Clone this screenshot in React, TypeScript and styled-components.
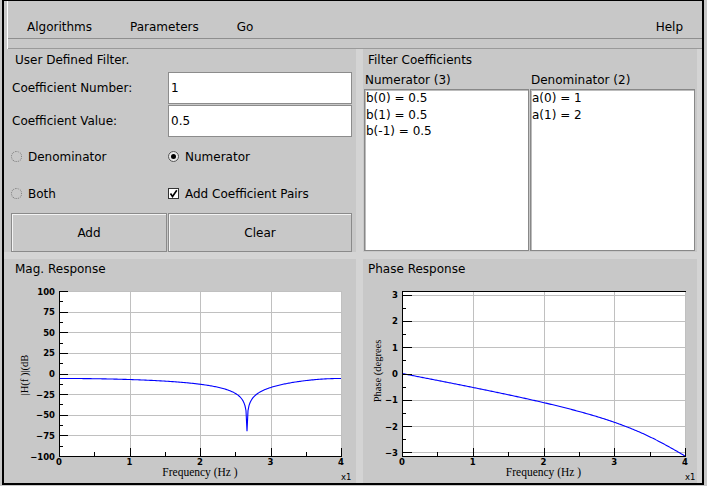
import React from "react";
import styled, { createGlobalStyle } from "styled-components";

const PANEL = "#c8c8c8";
const BAND = "#d4d4d4";
const GRID = "#c0c0c0";
const BLUE = "#0000ff";

const Global = createGlobalStyle`
  *, *::before, *::after { box-sizing: border-box; }
  html, body { margin: 0; padding: 0; background: #c8c8c8; }
  body {
    font-family: "DejaVu Sans", "Liberation Sans", sans-serif;
    font-size: 12px;
    color: #000;
  }
`;

const Window = styled.div`
  width: 702px;
  height: 485px;
  margin-left: 2px;
  border-style: solid;
  border-color: #000;
  border-width: 1px 2px 2px 2px;
  background: ${PANEL};
  display: flex;
  flex-direction: column;
`;

const TopChrome = styled.div`
  padding-left: 3px;
`;

const ChromeInner = styled.div`
  border-left: 1px solid #ffffff;
  display: flex;
  flex-direction: column;
`;

const MenuBar = styled.nav`
  height: 38px;
  border-bottom: 1px solid #8e8e8e;
  display: flex;
  align-items: flex-end;
  padding: 0 0 4px 0;
`;

const MenuItem = styled.span<{ $right?: boolean }>`
  line-height: 14px;
  padding: 0 19px;
  margin-left: ${(p) => (p.$right ? "auto" : "0")};
`;

const MenuStrip = styled.div`
  height: 10px;
  border-bottom: 1px solid #9a9a9a;
`;

const Main = styled.div`
  flex: 1;
  background: ${BAND};
  display: grid;
  grid-template-columns: 352px 334px;
  grid-template-rows: 203px 224px;
  column-gap: 7px;
  row-gap: 7px;
  padding-right: 5px;
`;

const Panel = styled.section<{ $padLeft?: number }>`
  background: ${PANEL};
  display: flex;
  flex-direction: column;
  padding-left: ${(p) => p.$padLeft ?? 0}px;
  overflow: hidden;
`;

const PanelTitle = styled.div<{ $indent: number; $h: number }>`
  height: ${(p) => p.$h}px;
  line-height: ${(p) => p.$h}px;
  padding-left: ${(p) => p.$indent}px;
  white-space: nowrap;
`;

const FormRow = styled.div<{ $h: number; $mt?: number; $mb?: number }>`
  display: grid;
  grid-template-columns: 156px 184px;
  column-gap: 1px;
  height: ${(p) => p.$h}px;
  margin-top: ${(p) => p.$mt ?? 0}px;
  margin-bottom: ${(p) => p.$mb ?? 0}px;
  align-items: center;
`;

const FieldLabel = styled.label`
  padding-left: 1px;
  white-space: nowrap;
`;

const TextField = styled.input`
  height: 32px;
  width: 100%;
  border: 1px solid #8c8c8c;
  background: #fff;
  padding: 0 2px;
  margin: 0;
  font-family: "DejaVu Sans", "Liberation Sans", sans-serif;
  font-size: 12px;
  color: #000;
  outline: none;
`;

const Option = styled.div`
  display: flex;
  align-items: center;
  gap: 6px;
  white-space: nowrap;
`;

const RadioMark = styled.span<{ $checked?: boolean }>`
  width: 11px;
  height: 11px;
  border-radius: 50%;
  border: 1px ${(p) => (p.$checked ? "solid #555" : "dotted #7a7a7a")};
  background: ${(p) => (p.$checked ? "#e8e8e8" : "transparent")};
  display: flex;
  align-items: center;
  justify-content: center;
  &::after {
    content: "";
    width: 5px;
    height: 5px;
    border-radius: 50%;
    background: ${(p) => (p.$checked ? "#000" : "transparent")};
  }
`;

const CheckMark = styled.span`
  width: 11px;
  height: 11px;
  border: 1px solid #333;
  background: #fff;
  display: flex;
  align-items: center;
  justify-content: center;
`;

const Button = styled.button`
  height: 39px;
  width: 100%;
  margin: 0;
  padding: 0;
  background: ${PANEL};
  border: 1px solid #8a8a8a;
  box-shadow: inset 1px 1px 0 #f4f4f4;
  font-family: "DejaVu Sans", "Liberation Sans", sans-serif;
  font-size: 12px;
  color: #000;
`;

const Columns = styled.div`
  display: grid;
  grid-template-columns: 165px 165px;
  column-gap: 1px;
  padding-left: 1px;
`;

const ListColumn = styled.div`
  display: flex;
  flex-direction: column;
`;

const ListHeader = styled.div`
  height: 17px;
  line-height: 17px;
  padding-left: 1px;
  white-space: nowrap;
`;

const ListBox = styled.div`
  height: 162px;
  background: #fff;
  border: 1px solid #888;
  box-shadow: inset 1px 1px 0 #bcbcbc;
  padding: 0 1px;
  line-height: 16.5px;
`;

const ListItem = styled.div`
  white-space: nowrap;
`;

const ChartSvg = styled.svg`
  display: block;
  flex: none;
`;

interface ChartSpec {
  width: number;
  height: number;
  left: number;
  right: number;
  top: number;
  bottom: number;
  yMin: number;
  yMax: number;
  yMajor: number[];
  yMinor: number[];
  yGrid: number[];
  yMajorLen: number;
  fmt: (v: number) => string;
  axisLabel: string;
  axisLabelX: number;
  axisLabelY: number;
  topBlack: boolean;
  fn: (w: number) => number;
  clipMin?: number;
}

const TICK_FONT = { fontFamily: "'DejaVu Sans', sans-serif", fontSize: 8.5, fontWeight: 700 } as const;
const SERIF_FONT = { fontFamily: "'Liberation Serif', 'DejaVu Serif', serif" } as const;

function Chart({ spec }: { spec: ChartSpec }) {
  const { width, height, left, right, top, bottom, yMin, yMax } = spec;
  const sx = (f: number) => left + (f / 4) * (right - left);
  const sy = (v: number) => bottom - ((v - yMin) / (yMax - yMin)) * (bottom - top);
  const c = (v: number) => Math.round(v) + 0.5;
  const N = Math.round(right - left);
  const pts: string[] = [];
  for (let i = 0; i <= N; i++) {
    const f = (4 * i) / N;
    const w = (Math.PI * f) / 4;
    let v = spec.fn(w);
    if (spec.clipMin !== undefined) v = Math.max(spec.clipMin, v);
    pts.push(`${(left + i).toFixed(1)},${sy(v).toFixed(2)}`);
  }
  const xMajor = [0, 1, 2, 3, 4];
  const xMinor = [0.5, 1.5, 2.5, 3.5];
  const midX = (left + right) / 2;
  return (
    <ChartSvg width={width} height={height} viewBox={`0 0 ${width} ${height}`}>
      <rect x={left} y={top} width={right - left} height={bottom - top} fill="#fff" />
      <g stroke={GRID} strokeWidth={1} shapeRendering="crispEdges">
        {spec.yGrid.map((v) => (
          <line key={`gy${v}`} x1={left} x2={right} y1={c(sy(v))} y2={c(sy(v))} />
        ))}
        {[1, 2, 3, 4].map((f) => (
          <line key={`gx${f}`} x1={c(sx(f))} x2={c(sx(f))} y1={top} y2={bottom} />
        ))}
      </g>
      <polyline points={pts.join(" ")} fill="none" stroke={BLUE} strokeWidth={1.1} />
      <g stroke="#000" strokeWidth={1} shapeRendering="crispEdges">
        {spec.topBlack && <line x1={left} x2={right + 1} y1={c(top)} y2={c(top)} />}
        <line x1={c(left)} x2={c(left)} y1={top} y2={bottom + 1} />
        <line x1={left} x2={right + 1} y1={c(bottom)} y2={c(bottom)} />
        {spec.yMajor.map((v) => (
          <line key={`ty${v}`} x1={left} x2={left + spec.yMajorLen} y1={c(sy(v))} y2={c(sy(v))} />
        ))}
        {spec.yMinor.map((v) => (
          <line key={`tm${v}`} x1={left} x2={left + 4} y1={c(sy(v))} y2={c(sy(v))} />
        ))}
        {xMajor.map((f) => (
          <line key={`tx${f}`} x1={c(sx(f))} x2={c(sx(f))} y1={bottom - 8} y2={bottom} />
        ))}
        {xMinor.map((f) => (
          <line key={`txm${f}`} x1={c(sx(f))} x2={c(sx(f))} y1={bottom - 4} y2={bottom} />
        ))}
      </g>
      <g {...TICK_FONT} fill="#000">
        {spec.yMajor.map((v) => (
          <text key={`ly${v}`} x={left - 4} y={sy(v) + 3.5} textAnchor="end">
            {spec.fmt(v)}
          </text>
        ))}
        {xMajor.map((f) => (
          <text key={`lx${f}`} x={sx(f)} y={bottom + 8.5} textAnchor="middle">
            {f}
          </text>
        ))}
      </g>
      <text x={right} y={height - 2} fontFamily="'DejaVu Sans', sans-serif" fontSize={8.5} fill="#000">
        x1
      </text>
      <text x={midX} y={bottom + 19.5} textAnchor="middle" fontSize={11.5} fill="#000" {...SERIF_FONT}>
        Frequency (Hz )
      </text>
      <text
        transform={`translate(${spec.axisLabelX} ${spec.axisLabelY}) rotate(-90)`}
        textAnchor="middle"
        fontSize={10.5}
        fill="#000"
        {...SERIF_FONT}
      >
        {spec.axisLabel}
      </text>
    </ChartSvg>
  );
}

const fmtNum = (v: number) => (v < 0 ? `\u2212${Math.abs(v)}` : `${v}`);

const magSpec: ChartSpec = {
  width: 352,
  height: 203,
  left: 55,
  right: 337,
  top: 12,
  bottom: 177,
  yMin: -100,
  yMax: 100,
  yMajor: [100, 75, 50, 25, 0, -25, -50, -75, -100],
  yMinor: [87.5, 62.5, 37.5, 12.5, -12.5, -37.5, -62.5, -87.5],
  yGrid: [100, 75, 50, 25, 0, -25, -50, -75],
  yMajorLen: 9,
  fmt: fmtNum,
  axisLabel: "|H(f )|(dB",
  axisLabelX: 24,
  axisLabelY: 96,
  topBlack: false,
  fn: (w) => {
    const num = Math.abs(0.5 * (1 + 2 * Math.cos(w)));
    const den = Math.sqrt(5 + 4 * Math.cos(w));
    return 20 * Math.log10(num / den);
  },
  clipMin: -70,
};

const phaseSpec: ChartSpec = {
  width: 334,
  height: 203,
  left: 39,
  right: 322,
  top: 12,
  bottom: 177,
  yMin: -Math.PI,
  yMax: Math.PI,
  yMajor: [3, 2, 1, 0, -1, -2, -3],
  yMinor: [2.5, 1.5, 0.5, -0.5, -1.5, -2.5],
  yGrid: [3, 2, 1, 0, -1, -2, -3],
  yMajorLen: 10,
  fmt: fmtNum,
  axisLabel: "Phase (degrees",
  axisLabelX: 18,
  axisLabelY: 92,
  topBlack: true,
  fn: (w) => Math.atan2(-2 * Math.sin(w), 1 + 2 * Math.cos(w)),
};

export default function App() {
  return (
    <>
      <Global />
      <Window>
        <TopChrome>
          <ChromeInner>
            <MenuBar>
              <MenuItem>Algorithms</MenuItem>
              <MenuItem>Parameters</MenuItem>
              <MenuItem>Go</MenuItem>
              <MenuItem $right>Help</MenuItem>
            </MenuBar>
            <MenuStrip />
          </ChromeInner>
        </TopChrome>
        <Main>
          <Panel $padLeft={7}>
            <PanelTitle $indent={4} $h={23}>User Defined Filter.</PanelTitle>
            <FormRow $h={32} $mb={1}>
              <FieldLabel>Coefficient Number:</FieldLabel>
              <TextField readOnly value="1" />
            </FormRow>
            <FormRow $h={32} $mb={1}>
              <FieldLabel>Coefficient Value:</FieldLabel>
              <TextField readOnly value="0.5" />
            </FormRow>
            <FormRow $h={37}>
              <Option>
                <RadioMark />
                Denominator
              </Option>
              <Option>
                <RadioMark $checked />
                Numerator
              </Option>
            </FormRow>
            <FormRow $h={37}>
              <Option>
                <RadioMark />
                Both
              </Option>
              <Option>
                <CheckMark>
                  <svg width="9" height="9" viewBox="0 0 9 9">
                    <path d="M1.5 4.5 L3.5 7.5 L7.8 1.2" fill="none" stroke="#000" strokeWidth="1.6" />
                  </svg>
                </CheckMark>
                Add Coefficient Pairs
              </Option>
            </FormRow>
            <FormRow $h={39} $mt={1}>
              <Button>Add</Button>
              <Button>Clear</Button>
            </FormRow>
          </Panel>
          <Panel>
            <PanelTitle $indent={5} $h={23}>Filter Coefficients</PanelTitle>
            <Columns>
              <ListColumn>
                <ListHeader>Numerator (3)</ListHeader>
                <ListBox>
                  <ListItem>b(0) = 0.5</ListItem>
                  <ListItem>b(1) = 0.5</ListItem>
                  <ListItem>b(-1) = 0.5</ListItem>
                </ListBox>
              </ListColumn>
              <ListColumn>
                <ListHeader>Denominator (2)</ListHeader>
                <ListBox>
                  <ListItem>a(0) = 1</ListItem>
                  <ListItem>a(1) = 2</ListItem>
                </ListBox>
              </ListColumn>
            </Columns>
          </Panel>
          <Panel>
            <PanelTitle $indent={11} $h={20}>Mag. Response</PanelTitle>
            <Chart spec={magSpec} />
          </Panel>
          <Panel>
            <PanelTitle $indent={5} $h={20}>Phase Response</PanelTitle>
            <Chart spec={phaseSpec} />
          </Panel>
        </Main>
      </Window>
    </>
  );
}
